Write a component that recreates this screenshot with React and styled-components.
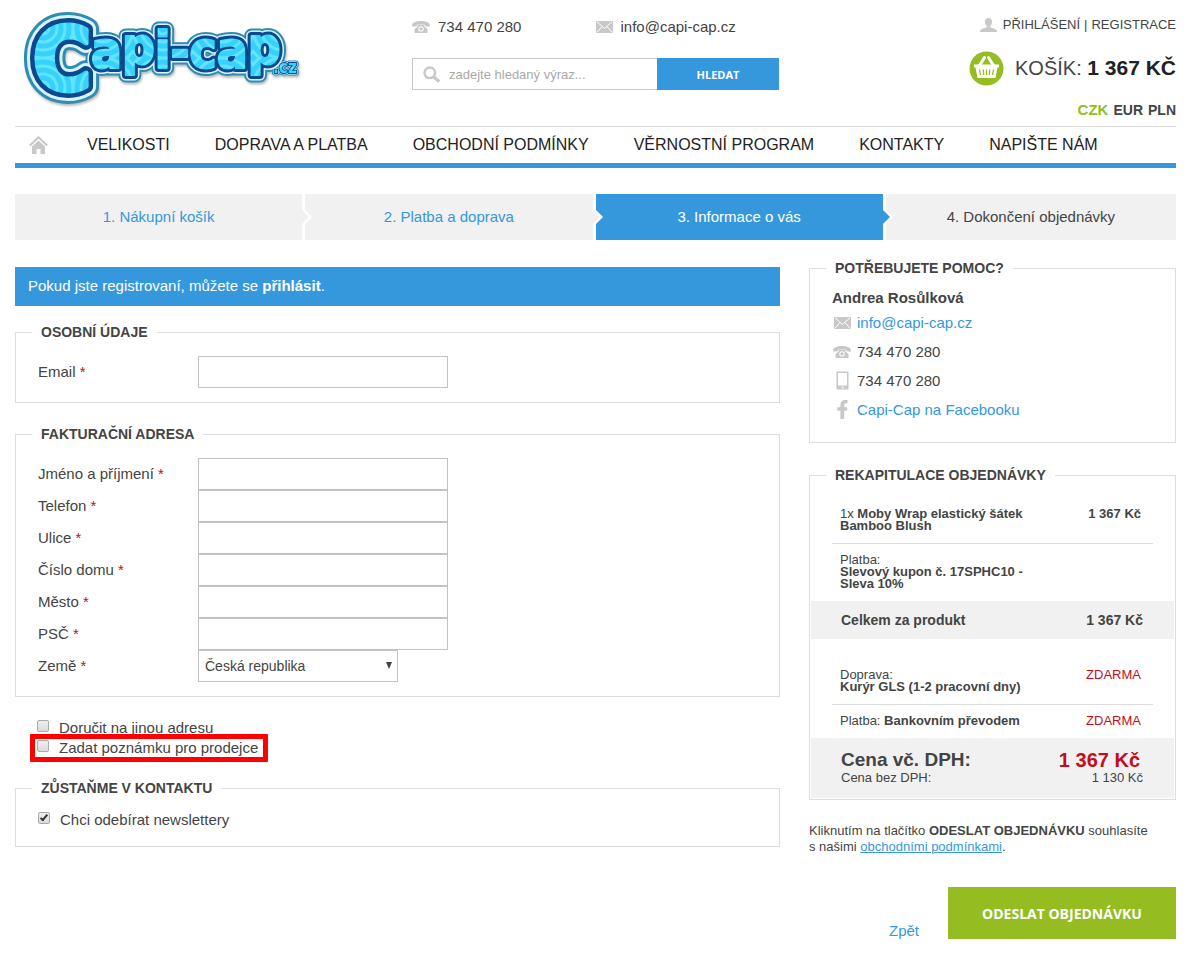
import React from "react";
import styled, { createGlobalStyle, css } from "styled-components";
import { FaFacebookF } from "react-icons/fa";

const blue = "#3598dc";
const green = "#95bd22";
const red = "#c20e1a";
const ink = "#444444";
const line = "#dddddd";
const pale = "#f1f1f1";
const iconGray = "#c8c8c8";

const GlobalStyle = createGlobalStyle`
  *, *::before, *::after { box-sizing: border-box; }
  body {
    margin: 0;
    background: #ffffff;
    color: ${ink};
    font-family: "Liberation Sans", Arial, sans-serif;
    font-size: 15px;
    line-height: 20px;
  }
  a { color: ${blue}; text-decoration: none; }
  svg { display: block; flex: none; }
`;

const Page = styled.div`
  padding: 0 14px 14px 15px;
`;

/* ---------- header ---------- */

const Header = styled.header`
  display: grid;
  grid-template-columns: minmax(300px, 397px) 367px minmax(220px, 1fr);
  min-height: 126px;
`;

const LogoLink = styled.a`
  padding: 6px 0 0 5px;
`;

const HeaderMiddle = styled.div`
  padding-top: 17px;
`;

const Contacts = styled.div`
  display: grid;
  grid-template-columns: 1fr 1fr;
  margin-bottom: 21px;
`;

const ContactItem = styled.span`
  display: flex;
  align-items: center;
  gap: 8px;
`;

const SearchForm = styled.form`
  display: flex;
  height: 32px;
`;

const SearchField = styled.label`
  display: flex;
  flex: 1;
  align-items: center;
  gap: 8px;
  padding: 0 10px;
  border: 1px solid #c8c8c8;
  border-right: 0;
`;

const SearchInput = styled.input`
  flex: 1;
  min-width: 0;
  padding: 0;
  border: 0;
  outline: 0;
  font: 13px "Liberation Sans", Arial, sans-serif;
  color: ${ink};
  &::placeholder { color: #a9a9a9; opacity: 1; }
`;

const SearchButton = styled.button`
  width: 122px;
  border: 0;
  background: ${blue};
  color: #ffffff;
  font: 700 11px "Open Sans", sans-serif;
`;

const HeaderRight = styled.div`
  display: flex;
  flex-direction: column;
  align-items: flex-end;
  padding-top: 15px;
`;

const UserLinks = styled.div`
  display: flex;
  align-items: center;
  gap: 4px;
  font-size: 13px;
  a { color: ${ink}; }
  svg { margin-right: 2px; }
`;

const Cart = styled.a`
  display: flex;
  align-items: center;
  gap: 11px;
  margin-top: 15px;
  height: 36px;
  color: ${ink};
  font-size: 20px;
  strong { color: #222222; font-size: 21px; }
`;

const Currencies = styled.div`
  display: flex;
  gap: 5px;
  margin-top: 14px;
  font-size: 14px;
  font-weight: 700;
  a { color: ${ink}; }
`;

const ActiveCurrency = styled.span`
  color: ${green};
  font-size: 15px;
`;

/* ---------- navigation and steps ---------- */

const Nav = styled.nav`
  display: flex;
  align-items: center;
  gap: 45px;
  height: 42px;
  padding: 0 14px;
  border-top: 1px solid ${line};
  border-bottom: 5px solid ${blue};
`;

const NavLink = styled.a`
  color: #222222;
  font-size: 16px;
  white-space: nowrap;
`;

const HomeLink = styled.a`
  margin-right: -6px;
`;

const Steps = styled.ol`
  display: grid;
  grid-template-columns: repeat(4, 1fr);
  margin: 26px 0 0;
  padding: 0;
  list-style: none;
`;

const stepFill = (p) => (p.$active ? blue : pale);
const stepInk = (p) => (p.$active ? "#ffffff" : p.$done ? blue : ink);

const Step = styled.li`
  position: relative;
  display: flex;
  align-items: center;
  justify-content: center;
  height: 46px;
  background: ${stepFill};
  color: ${stepInk};
  a { color: inherit; }

  ${(p) =>
    !p.$last &&
    css`
      border-right: 3px solid #ffffff;
      &::before,
      &::after {
        content: "";
        position: absolute;
        top: 50%;
        left: 100%;
        z-index: 1;
        border-style: solid;
        border-color: transparent;
      }
      &::before {
        margin-top: -10px;
        border-width: 10px 0 10px 10px;
        border-left-color: #ffffff;
      }
      &::after {
        margin-top: -7px;
        border-width: 7px 0 7px 7px;
        border-left-color: ${stepFill(p)};
      }
    `}
`;

/* ---------- main layout ---------- */

const Main = styled.main`
  display: grid;
  grid-template-columns: minmax(0, 1fr) 367px;
  gap: 29px;
  margin-top: 18px;
`;

const FormColumn = styled.form`
  padding-top: 9px;
`;

const Notice = styled.p`
  margin: 0 0 16px;
  padding: 9px 13px 10px;
  background: ${blue};
  color: #ffffff;
  a { color: #ffffff; font-weight: 700; }
`;

const Panel = styled.fieldset`
  min-width: 0;
  margin: 0 0 ${(p) => p.$after || 0}px;
  padding: ${(p) => p.$pad || "14px 22px"};
  border: 1px solid ${line};
`;

const Legend = styled.legend`
  margin-left: ${(p) => p.$offset || 0}px;
  padding: 0 9px;
  font-size: 14px;
  font-weight: 700;
  text-transform: uppercase;
`;

const FieldRow = styled.div`
  display: grid;
  grid-template-columns: 160px 1fr;
  align-items: center;
  height: 32px;
`;

const Required = styled.span`
  color: ${red};
`;

const controlBox = css`
  height: 32px;
  padding: 0 6px;
  border: 1px solid #c3c3c3;
  border-radius: 0;
  outline: 0;
  background: #ffffff;
  color: ${ink};
  font: 14px "Liberation Sans", Arial, sans-serif;
`;

const TextInput = styled.input`
  ${controlBox}
  width: 250px;
`;

const SelectBox = styled.span`
  position: relative;
  width: 200px;
  svg {
    position: absolute;
    top: 12px;
    right: 6px;
    pointer-events: none;
  }
`;

const Select = styled.select`
  ${controlBox}
  display: block;
  width: 100%;
  appearance: none;
`;

const Extras = styled.div`
  display: flex;
  flex-direction: column;
  align-items: flex-start;
  margin-bottom: 20px;
  padding-left: 22px;
`;

const CheckLabel = styled.label`
  position: relative;
  display: flex;
  align-items: flex-start;
  gap: 10px;
`;

const Checkbox = styled.input`
  position: relative;
  width: 12px;
  height: 12px;
  margin: 2px 0 0;
  appearance: none;
  border: 1px solid #a9a9a9;
  border-radius: 2px;
  background: linear-gradient(#eeeeee, #dcdcdc);
  &:checked::after {
    content: "";
    position: absolute;
    top: 0;
    left: 3px;
    width: 4px;
    height: 8px;
    border: solid #333333;
    border-width: 0 2px 2px 0;
    transform: rotate(40deg);
  }
`;

const Highlight = styled.span`
  position: absolute;
  inset: -4px -10px -4px -7px;
  border: 5px solid #ff0000;
  border-radius: 1px;
  pointer-events: none;
`;

/* ---------- sidebar ---------- */

const HelpName = styled.strong`
  display: block;
`;

const HelpList = styled.ul`
  margin: 0;
  padding: 0;
  list-style: none;
`;

const HelpItem = styled.li`
  display: grid;
  grid-template-columns: 20px 1fr;
  align-items: center;
  justify-items: center;
  gap: 5px;
  height: 29px;
  & > :last-child { justify-self: start; }
`;

const ItemTable = styled.table`
  width: calc(100% - 42px);
  margin: ${(p) => p.$top || 0}px 21px 0;
  border-collapse: separate;
  border-spacing: 0;
  font-size: 13px;
  line-height: 12px;
  tr + tr > * { border-top: 1px solid ${line}; }
`;

const ItemName = styled.th`
  width: 66%;
  padding: 10px 0 11px 8px;
  text-align: left;
  font-weight: 400;
`;

const ItemPrice = styled.td`
  padding: 10px 12px 11px 0;
  text-align: right;
  vertical-align: top;
  font-weight: ${(p) => (p.$free ? 400 : 700)};
  color: ${(p) => (p.$free ? red : ink)};
`;

const TotalTable = styled.table`
  width: 100%;
  border-collapse: separate;
  border-spacing: 0;
  padding: ${(p) => p.$pad};
  background: ${pale};
  font-size: 14px;
  th, td { padding: 0; }
  th { text-align: left; }
  td { text-align: right; font-weight: 700; }
`;

const GrandRow = styled.tr`
  font-size: 19px;
  && td { padding-right: 3px; color: ${red}; font-size: 20px; }
`;

const NetRow = styled.tr`
  font-size: 13px;
  line-height: 16px;
  && th, && td { font-weight: 400; }
`;

const Terms = styled.p`
  margin: 23px 0 32px;
  font-size: 13px;
  line-height: 16px;
  a { text-decoration: underline; }
`;

const Actions = styled.div`
  display: flex;
  align-items: flex-end;
  justify-content: flex-end;
  gap: 29px;
`;

const BackLink = styled.a`
  line-height: 16px;
`;

const SubmitButton = styled.button`
  width: 228px;
  height: 52px;
  border: 0;
  background: ${green};
  color: #ffffff;
  font: 700 14px "Open Sans", sans-serif;
`;

/* ---------- drawings ---------- */

const logoFont = {
  fontFamily: '"DejaVu Sans Condensed", "DejaVu Sans", sans-serif',
  fontWeight: 700,
  strokeLinejoin: "round",
};

const logoLayers = [
  { color: "#2d8db0", big: 26, mid: 15, small: 5 },
  { color: "#d8f3fb", big: 20, mid: 11, small: 3 },
  { color: "#07488f", big: 14, mid: 8, small: 2 },
  { color: "url(#rings)", big: 5, mid: 2, small: 0 },
];

function LogoText({ color, big, mid, small }) {
  return (
    <g fill={color} stroke={color} style={logoFont}>
      <text x="13" y="84" fontSize="88" strokeWidth={big}>C</text>
      <text x="71" y="62 58 62 62 62 62 58" fontSize="51" strokeWidth={mid}>api-cap</text>
      <text x="253" y="67" fontSize="17" strokeWidth={small}>.cz</text>
    </g>
  );
}

function Logo() {
  return (
    <svg width="284" height="106" viewBox="0 0 284 106" role="img" aria-label="Capi-Cap.cz">
      <defs>
        <pattern id="rings" width="60" height="60" patternUnits="userSpaceOnUse" x="-7" y="-8">
          <rect width="60" height="60" fill="#35d3fb" />
          {[6, 14, 22, 30, 38].map((r) => (
            <circle key={r} cx="30" cy="30" r={r} fill="none" stroke="#62e4ff" strokeWidth="3" />
          ))}
        </pattern>
        <filter id="logoShadow" x="-5%" y="-5%" width="112%" height="115%">
          <feDropShadow dx="1" dy="2" stdDeviation="1" floodColor="#777777" floodOpacity="0.5" />
        </filter>
      </defs>
      <g filter="url(#logoShadow)">
        {logoLayers.map((l) => (
          <LogoText key={l.color} {...l} />
        ))}
      </g>
    </svg>
  );
}

const PhoneIcon = () => (
  <svg width="18" height="12" viewBox="0 0 18 12" fill={iconGray}>
    <path d="M0 4.600C.2 1.600 4 0 9 0s8.800 1.600 9 4.600c0 .8-.4 1.200-1.200 1.100l-2.900-.4c-.8-.1-1-.6-1-1.500C11 3.200 7 3.200 5.100 3.800c0 .9-.2 1.400-1 1.500l-2.900.4C.4 5.800 0 5.400 0 4.600z" />
    <path fillRule="evenodd" d="M6 3.400h6c.3 1.900 1 2.800 2.300 3.500.9.500 1.200 1.200 1.200 2.200V11c0 .6-.3 1-1 1h-11c-.7 0-1-.4-1-1V9.100c0-1 .3-1.700 1.200-2.200C5 6.200 5.700 5.300 6 3.400zm3 1.800a2.700 2.700 0 1 0 0 5.400 2.700 2.700 0 0 0 0-5.400zm0 1a1.700 1.700 0 1 1 0 3.400 1.700 1.700 0 0 1 0-3.400z" />
  </svg>
);

const MailIcon = () => (
  <svg width="17" height="12" viewBox="0 0 17 12">
    <rect width="17" height="12" rx="1" fill={iconGray} />
    <path d="M1 .8l7.500 6.700L16 .8M1 11.200l5-5.500M16 11.200l-5-5.500" fill="none" stroke="#ffffff" strokeWidth="1" />
  </svg>
);

const MobileIcon = () => (
  <svg width="13" height="19" viewBox="0 0 13 19">
    <rect x=".5" y=".5" width="12" height="18" rx="1" fill={iconGray} />
    <rect x="2" y="2" width="9" height="12.500" fill="#ffffff" />
    <circle cx="6.500" cy="16.500" r="1" fill="#ffffff" />
  </svg>
);

const SearchIcon = () => (
  <svg width="18" height="17" viewBox="0 0 18 17" fill="none" stroke={iconGray}>
    <circle cx="6.800" cy="6.800" r="5.300" strokeWidth="2.400" />
    <path d="M11 11l5.300 4.800" strokeWidth="3.200" />
  </svg>
);

const UserIcon = () => (
  <svg width="17" height="14" viewBox="0 0 17 14" fill={iconGray}>
    <path d="M8.500 0c2.300 0 3.500 1.500 3.500 3.700 0 1.800-.7 3.300-1.800 4.200v1.300l4.800 1.700c1.400.5 1.900 1.300 2 3.100H0c.1-1.800.6-2.600 2-3.100l4.800-1.700V7.900C5.700 7 5 5.500 5 3.700 5 1.500 6.200 0 8.500 0z" />
  </svg>
);

const HomeIcon = () => (
  <svg width="19" height="18" viewBox="0 0 19 18">
    <path d="M.8 9.500L9.500 1.300l8.700 8.200" fill="none" stroke={iconGray} strokeWidth="2" />
    <path d="M3 10.500l6.500-6 6.500 6V18h-4.500v-5h-4v5H3z" fill={iconGray} />
  </svg>
);

const BasketIcon = () => (
  <svg width="35" height="35" viewBox="0 0 35 35">
    <circle cx="17.500" cy="17.500" r="17" fill={green} />
    <path d="M10.500 14.500L15.500 6.500M24.500 14.500L19.500 6.500" stroke="#ffffff" strokeWidth="3" strokeLinecap="round" />
    <path d="M5 13.500h25v3h-1.500L26.500 27h-18L6.500 16.500H5z" fill="#ffffff" />
    <path d="M10.500 18.500l1 5.500M14.300 18.500l.4 5.500M17.500 18.500V24M20.700 18.500l-.4 5.500M24.500 18.500l-1 5.500" stroke={green} strokeWidth="1.300" />
  </svg>
);

const SelectArrow = () => (
  <svg width="6" height="7" viewBox="0 0 6 7">
    <path d="M0 0h6L3 7z" fill={ink} />
  </svg>
);

/* ---------- content ---------- */

const navItems = [
  "VELIKOSTI",
  "DOPRAVA A PLATBA",
  "OBCHODNÍ PODMÍNKY",
  "VĚRNOSTNÍ PROGRAM",
  "KONTAKTY",
  "NAPIŠTE NÁM",
];

const addressFields = [
  ["name", "Jméno a příjmení"],
  ["phone", "Telefon"],
  ["street", "Ulice"],
  ["house", "Číslo domu"],
  ["city", "Město"],
  ["zip", "PSČ"],
];

function Field({ id, label, children }) {
  return (
    <FieldRow>
      <label htmlFor={id}>
        {label} <Required>*</Required>
      </label>
      {children || <TextInput id={id} name={id} type="text" />}
    </FieldRow>
  );
}

export default function App() {
  return (
    <>
      <GlobalStyle />
      <Page>
        <Header>
          <LogoLink href="#"><Logo /></LogoLink>
          <HeaderMiddle>
            <Contacts>
              <ContactItem><PhoneIcon />734 470 280</ContactItem>
              <ContactItem><MailIcon />info@capi-cap.cz</ContactItem>
            </Contacts>
            <SearchForm>
              <SearchField>
                <SearchIcon />
                <SearchInput type="text" aria-label="Hledat" placeholder="zadejte hledaný výraz..." />
              </SearchField>
              <SearchButton type="button">HLEDAT</SearchButton>
            </SearchForm>
          </HeaderMiddle>
          <HeaderRight>
            <UserLinks>
              <UserIcon />
              <a href="#">PŘIHLÁŠENÍ</a>
              <span>|</span>
              <a href="#">REGISTRACE</a>
            </UserLinks>
            <Cart href="#">
              <BasketIcon />
              <span>KOŠÍK: <strong>1 367 KČ</strong></span>
            </Cart>
            <Currencies>
              <ActiveCurrency>CZK</ActiveCurrency>
              <a href="#">EUR</a>
              <a href="#">PLN</a>
            </Currencies>
          </HeaderRight>
        </Header>

        <Nav>
          <HomeLink href="#" aria-label="Domů"><HomeIcon /></HomeLink>
          {navItems.map((item) => (
            <NavLink key={item} href="#">{item}</NavLink>
          ))}
        </Nav>

        <Steps>
          <Step $done><a href="#">1. Nákupní košík</a></Step>
          <Step $done><a href="#">2. Platba a doprava</a></Step>
          <Step $active>3. Informace o vás</Step>
          <Step $last>4. Dokončení objednávky</Step>
        </Steps>

        <Main>
          <FormColumn id="order">
            <Notice>
              Pokud jste registrovaní, můžete se <a href="#">přihlásit</a>.
            </Notice>

            <Panel $after={21}>
              <Legend $offset={-6}>Osobní údaje</Legend>
              <Field id="email" label="Email" />
            </Panel>

            <Panel $after={21}>
              <Legend $offset={-6}>Fakturační adresa</Legend>
              {addressFields.map(([id, label]) => (
                <Field key={id} id={id} label={label} />
              ))}
              <Field id="country" label="Země">
                <SelectBox>
                  <Select id="country" name="country" defaultValue="cz">
                    <option value="cz">Česká republika</option>
                  </Select>
                  <SelectArrow />
                </SelectBox>
              </Field>
            </Panel>

            <Extras>
              <CheckLabel>
                <Checkbox type="checkbox" />
                Doručit na jinou adresu
              </CheckLabel>
              <CheckLabel>
                <Checkbox type="checkbox" />
                Zadat poznámku pro prodejce
                <Highlight />
              </CheckLabel>
            </Extras>

            <Panel $pad="12px 22px 16px">
              <Legend $offset={-6}>Zůstaňme v kontaktu</Legend>
              <CheckLabel>
                <Checkbox type="checkbox" defaultChecked />
                Chci odebírat newslettery
              </CheckLabel>
            </Panel>
          </FormColumn>

          <aside>
            <Panel $after={22} $pad="10px 22px 18px">
              <Legend $offset={-6}>Potřebujete pomoc?</Legend>
              <HelpName>Andrea Rosůlková</HelpName>
              <HelpList>
                <HelpItem><MailIcon /><a href="#">info@capi-cap.cz</a></HelpItem>
                <HelpItem><PhoneIcon /><span>734 470 280</span></HelpItem>
                <HelpItem><MobileIcon /><span>734 470 280</span></HelpItem>
                <HelpItem><FaFacebookF size={19} color={iconGray} /><a href="#">Capi-Cap na Facebooku</a></HelpItem>
              </HelpList>
            </Panel>

            <Panel $pad="13px 1px 1px">
              <Legend $offset={15}>Rekapitulace objednávky</Legend>
              <ItemTable>
                <tbody>
                  <tr>
                    <ItemName scope="row">1x <strong>Moby Wrap elastický šátek Bamboo Blush</strong></ItemName>
                    <ItemPrice>1 367 Kč</ItemPrice>
                  </tr>
                  <tr>
                    <ItemName scope="row">Platba:<br /><strong>Slevový kupon č. 17SPHC10 - Sleva 10%</strong></ItemName>
                    <ItemPrice />
                  </tr>
                </tbody>
              </ItemTable>
              <TotalTable $pad="9px 31px 9px 30px">
                <tbody>
                  <tr>
                    <th scope="row">Celkem za produkt</th>
                    <td>1 367 Kč</td>
                  </tr>
                </tbody>
              </TotalTable>
              <ItemTable $top={20}>
                <tbody>
                  <tr>
                    <ItemName scope="row">Doprava:<br /><strong>Kurýr GLS (1-2 pracovní dny)</strong></ItemName>
                    <ItemPrice $free>ZDARMA</ItemPrice>
                  </tr>
                  <tr>
                    <ItemName scope="row">Platba: <strong>Bankovním převodem</strong></ItemName>
                    <ItemPrice $free>ZDARMA</ItemPrice>
                  </tr>
                </tbody>
              </ItemTable>
              <TotalTable $pad="12px 31px 12px 30px">
                <tbody>
                  <GrandRow>
                    <th scope="row">Cena vč. DPH:</th>
                    <td>1 367 Kč</td>
                  </GrandRow>
                  <NetRow>
                    <th scope="row">Cena bez DPH:</th>
                    <td>1 130 Kč</td>
                  </NetRow>
                </tbody>
              </TotalTable>
            </Panel>

            <Terms>
              Kliknutím na tlačítko <strong>ODESLAT OBJEDNÁVKU</strong> souhlasíte s&nbsp;našimi{" "}
              <a href="#">obchodními podmínkami</a>.
            </Terms>

            <Actions>
              <BackLink href="#">Zpět</BackLink>
              <SubmitButton type="submit" form="order">ODESLAT OBJEDNÁVKU</SubmitButton>
            </Actions>
          </aside>
        </Main>
      </Page>
    </>
  );
}
